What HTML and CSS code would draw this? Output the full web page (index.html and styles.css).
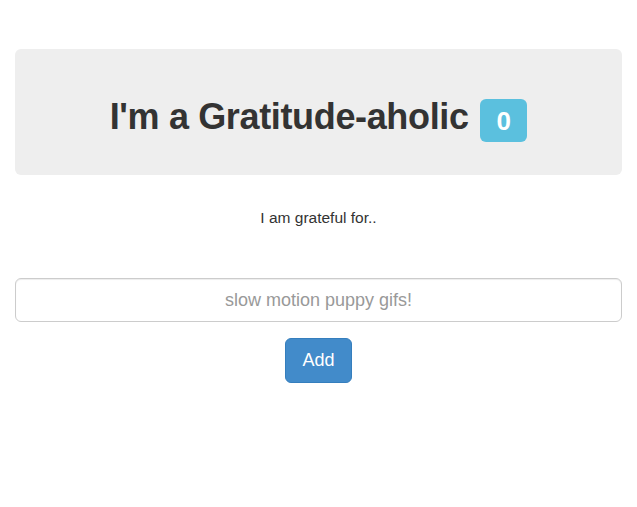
FILE: index.html
```html
<!DOCTYPE html>
<html lang="en">
<head>
<meta charset="utf-8">
<title>Gratitude-aholic</title>
<link rel="stylesheet" href="styles.css">
</head>
<body>
<div class="container">
  <div class="jumbotron">
    <h1 class="title">I'm a Gratitude-aholic <span class="count">0</span></h1>
  </div>
  <p class="prompt">I am grateful for..</p>
  <form class="entry">
    <input class="field" type="text" placeholder="slow motion puppy gifs!">
    <button class="btn-add" type="button">Add</button>
  </form>
</div>
</body>
</html>
```

FILE: styles.css
```css
html, body {
  margin: 0;
  padding: 0;
  background: #fff;
}
body {
  font-family: "Liberation Sans", Arial, Helvetica, sans-serif;
  color: #333;
}
.container {
  padding: 49px 15px 0;
}
.jumbotron {
  box-sizing: border-box;
  height: 126px;
  padding-top: 48px;
  background: #eeeeee;
  border-radius: 6px;
  text-align: center;
}
.title {
  margin: 0;
  font-size: 36px;
  line-height: 40px;
  font-weight: bold;
  letter-spacing: -0.35px;
  color: #333;
}
.count {
  display: inline-block;
  box-sizing: border-box;
  width: 47px;
  height: 43px;
  margin-left: 2px;
  padding: 9px 0 8px;
  font-size: 26px;
  line-height: 26px;
  letter-spacing: 0;
  font-weight: bold;
  text-align: center;
  color: #fff;
  background: #5bc0de;
  border-radius: 6px;
  vertical-align: -1px;
}
.prompt {
  margin: 33px 0 0;
  font-size: 15.5px;
  line-height: 20px;
  text-align: center;
  color: #333;
}
.entry {
  margin: 50px 0 0;
  display: flex;
  flex-direction: column;
  align-items: center;
  gap: 16px;
}
.field {
  box-sizing: border-box;
  width: 100%;
  height: 44px;
  margin: 0;
  padding: 0 16px;
  font-family: "Liberation Sans", Arial, sans-serif;
  font-size: 18px;
  color: #555;
  text-align: center;
  background: #fff;
  border: 1px solid #ccc;
  border-radius: 6px;
  box-shadow: inset 0 1px 1px rgba(0,0,0,0.075);
  outline: none;
}
.field::placeholder {
  color: #999;
}
.btn-add {
  box-sizing: border-box;
  height: 45px;
  width: 67px;
  padding: 0;
  font-family: "Liberation Sans", Arial, sans-serif;
  font-size: 18px;
  color: #fff;
  background: #428bca;
  border: 1px solid #357ebd;
  border-radius: 6px;
}
```
